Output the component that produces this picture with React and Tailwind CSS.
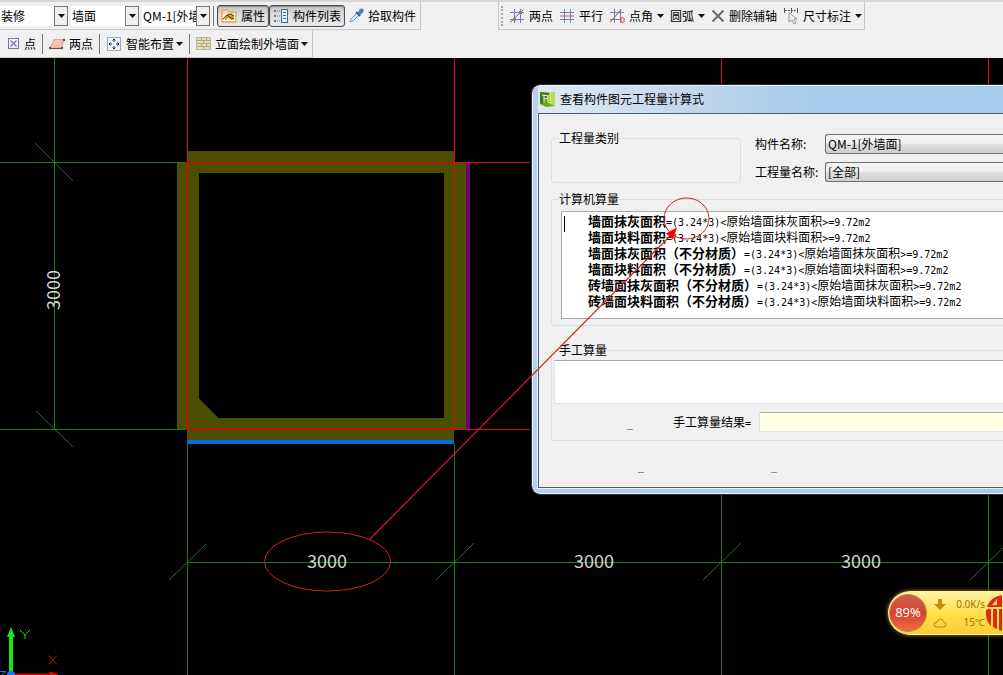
import { useState } from 'react';

const rows = [
  { name: '墙面抹灰面积', source: '原始墙面抹灰面积' },
  { name: '墙面块料面积', source: '原始墙面块料面积' },
  { name: '墙面抹灰面积（不分材质）', source: '原始墙面抹灰面积' },
  { name: '墙面块料面积（不分材质）', source: '原始墙面块料面积' },
  { name: '砖墙面抹灰面积（不分材质）', source: '原始墙面抹灰面积' },
  { name: '砖墙面块料面积（不分材质）', source: '原始墙面块料面积' },
];

const Caret = () => (
  <svg width="7" height="4" viewBox="0 0 7 4" className="shrink-0">
    <path d="M0 0h7L3.5 4z" fill="#111" />
  </svg>
);

const Divider = () => <span className="w-px h-5 bg-[#777] shrink-0" />;

const ToolSelect = ({ label, value }) => (
  <div className="relative w-[68px] h-5 bg-white shrink-0">
    <select aria-label={label} className="appearance-none w-full h-5 pl-px pr-3.5 bg-white outline-none overflow-hidden text-clip">
      <option>{value}</option>
    </select>
    <span className="absolute right-0 top-0 w-3.5 h-5 border border-[#777] bg-[#f0f0f0] flex items-center justify-center pointer-events-none">
      <Caret />
    </span>
  </div>
);

const ToolButton = ({ icon, children, pressed, menu, tight }) => (
  <button
    className={
      pressed
        ? 'flex items-center gap-1 h-[22px] px-[3px] rounded-[3px] border border-[#4c4c4c] bg-linear-to-b from-[#c4c4c4] via-[#dedede] to-[#e9e9e9] shadow-[inset_0_1px_1px_#888] whitespace-nowrap'
        : 'flex items-center gap-1 h-[22px] whitespace-nowrap'
    }
  >
    {icon}
    <span className={tight ? '-mr-0.5' : ''}>{children}</span>
    {menu && <Caret />}
  </button>
);

/* Toolbar icons */
const PropertyIcon = () => (
  <svg width="16" height="16" viewBox="0 0 16 16">
    <path d="M1 2h6l1 2h7v10H1z" fill="#f7d9a0" stroke="#dd9a4a" />
    <path d="M2 6h12v7H2z" fill="#fff6e0" />
    <path d="M3 11l3-4 4-1 3 2v3l-3 1-3-2-2 2z" fill="#c9a52c" />
    <path d="M2 11l4-4 4 3 3 1M6 7l4-1 3 2" fill="none" stroke="#4c3f12" />
    <path d="M1 14h14" stroke="#f0a860" />
  </svg>
);

const ListIcon = () => (
  <svg width="16" height="16" viewBox="0 0 16 16">
    <path d="M1 2h2v2H1zM1 7h2v2H1zM1 12h2v2H1z" fill="#5b7ba8" />
    <path d="M4 3h3M4 8h3M4 13h3" stroke="#5b7ba8" strokeDasharray="1 1" />
    <rect x="8.500" y="1.500" width="6" height="13" fill="#e6effb" stroke="#3f6aa8" />
    <path d="M10 4.500h3M10 7.500h3M10 10.500h3" stroke="#3f6aa8" />
  </svg>
);

const DropperIcon = () => (
  <svg width="16" height="16" viewBox="0 0 16 16">
    <path d="M2 14l1-3 6-6 2 2-6 6z" fill="#dcebf8" stroke="#6f9cc8" />
    <path d="M8 4l4 4" stroke="#2f5f9a" strokeWidth="2" />
    <path d="M9.500 5.500l2.500-4q2-1.500 3 0t-.5 3l-3 2.500z" fill="#4a86c4" stroke="#2f5f9a" strokeWidth=".6" />
  </svg>
);

const PointIcon = () => (
  <svg width="12" height="12" viewBox="0 0 12 12">
    <rect x=".5" y=".5" width="10" height="10" fill="#f0f0fa" stroke="#6d78a8" />
    <path d="M2.500 2.500l6 6M8.500 2.500l-6 6" stroke="#9a6d9c" strokeWidth="1.300" />
  </svg>
);

const PlaneIcon = () => (
  <svg width="16" height="16" viewBox="0 0 16 16">
    <path d="M5 3.500h10L12.500 12H1z" fill="#f4c4ae" stroke="#dba590" />
    <path d="M0 12.500h13" stroke="#7a4a3c" />
    <path d="M0 11h2v2H0zM12 11h2v2h-2zM14 3h2v2h-2z" fill="#6a4038" />
  </svg>
);

const SmartIcon = () => (
  <svg width="16" height="16" viewBox="0 0 16 16">
    <rect x="1.500" y="1.500" width="13" height="13" fill="#e9f1fa" stroke="#4a6488" strokeDasharray="1 1" />
    <path d="M8 3v3M8 10v3M3 8h3M10 8h3" stroke="#234" />
    <path d="M6.500 4.500L8 3l1.500 1.500M6.500 11.500L8 13l1.500-1.500M4.500 6.500L3 8l1.500 1.500M11.500 6.500L13 8l-1.500 1.500" fill="none" stroke="#234" />
  </svg>
);

const BrickIcon = () => (
  <svg width="15" height="15" viewBox="0 0 15 15">
    <rect x=".5" y="1.500" width="14" height="12" fill="#efe0a8" stroke="#bdb59c" />
    <path d="M1 2h4v2H1zM8 5h6v2H8zM1 8h4v2H1zM8 11h6v2H8z" fill="#d8dccf" />
    <path d="M1 4.500h13M1 7.500h13M1 10.500h13M5.500 2v2.500M10.500 2v2.500M7.500 4.500v3M5.500 7.500v3M10.500 7.500v3M7.500 10.500V13" stroke="#b0a88c" />
  </svg>
);

const GridIcon = ({ kind }) => (
  <svg width="16" height="16" viewBox="0 0 16 16">
    <path d="M5.500 1v14M11.500 1v14M1 4.500h14M1 11.500h14" stroke="#6f7db8" />
    {kind === 'line' && <path d="M1 14.500L14.500 1.500" stroke="#c04848" />}
    {kind === 'line' && <path d="M4 10h3v3H4zM10 3h3v3h-3z" fill="#5d9a58" />}
    {kind === 'parallel' && <path d="M1 8h14" stroke="#d86060" />}
    {kind === 'angle' && (
      <>
        <path d="M1 14.500L12 1.500" stroke="#c04848" />
        <ellipse cx="13.500" cy="12" rx="1.800" ry="2.500" fill="#f0f0f0" stroke="#d03838" />
      </>
    )}
  </svg>
);

const CrossIcon = () => (
  <svg width="14" height="14" viewBox="0 0 14 14">
    <path d="M1.500 1.500l11 11M12.500 1.500l-11 11" stroke="#666" strokeWidth="1.800" />
  </svg>
);

const DimensionIcon = () => (
  <svg width="16" height="16" viewBox="0 0 16 16">
    <path d="M1.500 0v5M8.500 0v5M14.500 0v5" stroke="#555" />
    <path d="M2 2.500h12" stroke="#555" strokeDasharray="2 1" />
    <path d="M6 4.500l8 6.500h-3l2 4-2 1-2-4-3 2z" fill="#eee" stroke="#999" />
  </svg>
);

const AppIcon = () => (
  <svg width="16" height="16" viewBox="0 0 16 16" className="shrink-0">
    <path d="M0 1l10 1 5-1v14l-9 1-6-3z" fill="#69a81c" />
    <path d="M0 1l10 1-3 4-5 7-2-1z" fill="#3f7a12" />
    <path d="M10 2l5-1v14l-5-2z" fill="#b6dd45" />
    <path d="M2 4l7 1M4 4v7M4 8l4-1M8 5v6l3 1M10 2v8" stroke="#eef8d8" fill="none" />
  </svg>
);

const Toolbars = () => (
  <header className="h-[58px] shrink-0 bg-[#f0f0f0] border-t-2 border-[#d6d6d6] overflow-hidden">
    <div className="flex h-7 whitespace-nowrap">
      <div className="flex items-center gap-[3px] pr-1 border-r border-b border-[#c8c8c8]">
        <ToolSelect label="模块" value="装修" />
        <ToolSelect label="构件类型" value="墙面" />
        <ToolSelect label="构件" value="QM-1[外墙面]" />
        <Divider />
        <div className="flex">
          <ToolButton icon={<PropertyIcon />} pressed>属性</ToolButton>
          <ToolButton icon={<ListIcon />} pressed>构件列表</ToolButton>
        </div>
        <ToolButton icon={<DropperIcon />}>拾取构件</ToolButton>
      </div>
      <div className="flex items-center gap-1.5 pr-0.5 ml-auto mr-[138px] border-l border-r border-b border-[#c8c8c8]">
        <span className="h-5 ml-0.5 border-l-2 border-dotted border-[#aaa]" />
        <ToolButton icon={<GridIcon kind="line" />}>两点</ToolButton>
        <ToolButton icon={<GridIcon kind="parallel" />}>平行</ToolButton>
        <ToolButton icon={<GridIcon kind="angle" />} menu>点角</ToolButton>
        <ToolButton menu>圆弧</ToolButton>
        <ToolButton icon={<CrossIcon />}>删除辅轴</ToolButton>
        <ToolButton icon={<DimensionIcon />} menu>尺寸标注</ToolButton>
      </div>
    </div>
    <div className="flex h-7">
      <div className="flex items-center gap-1.5 pl-2 pr-1 border-r border-b border-[#c8c8c8]">
        <ToolButton icon={<PointIcon />}>点</ToolButton>
        <Divider />
        <ToolButton icon={<PlaneIcon />}>两点</ToolButton>
        <Divider />
        <ToolButton icon={<SmartIcon />} menu tight>智能布置</ToolButton>
        <Divider />
        <ToolButton icon={<BrickIcon />} menu tight>立面绘制外墙面</ToolButton>
      </div>
    </div>
  </header>
);

/* Floor plan: axes, walls and dimension lines */
const Drawing = () => (
  <svg className="absolute inset-0 w-full h-full" aria-hidden="true">
    <g fill="#4d4d00">
      <path d="M187 93h267v11h12v268h-12v10H187v-10h-10V104h10z" />
      <path d="M199 115h245v245H218.500L199 340.500z" fill="#000" />
      <path d="M466 105h4v266h-4z" fill="#730073" />
      <path d="M187 382h267v4H187z" fill="#0070e0" />
    </g>
    {/* Dimension lines */}
    <g stroke="#1b7a1b">
      <line x1="54.500" y1="0" x2="54.500" y2="371" />
      <line x1="0" y1="104.500" x2="187" y2="104.500" />
      <line x1="0" y1="371.500" x2="187" y2="371.500" />
      <line x1="187.500" y1="386" x2="187.500" y2="617" />
      <line x1="454.500" y1="386" x2="454.500" y2="617" />
      <line x1="721.500" y1="436" x2="721.500" y2="617" />
      <line x1="988.500" y1="436" x2="988.500" y2="617" />
      <line x1="187" y1="504.500" x2="1003" y2="504.500" />
      <path d="M35 85l38 38M36 353l37 36M169 522l37-36M436 522l38-37M703 522l38-37M970 522l38-37" />
    </g>
    {/* Axes */}
    <g stroke="#d01414">
      <line x1="187.500" y1="0" x2="187.500" y2="371" />
      <line x1="454.500" y1="0" x2="454.500" y2="371" />
      <line x1="721.500" y1="0" x2="721.500" y2="30" />
      <line x1="988.500" y1="0" x2="988.500" y2="30" />
      <line x1="187" y1="104.500" x2="530" y2="104.500" />
      <line x1="187" y1="371.500" x2="530" y2="371.500" />
      <path d="M454 105H187v266h267" fill="none" stroke="#b01a00" strokeWidth="2" />
    </g>
    <g fill="#d4d4d4" fontSize="18" textAnchor="middle">
      <text x="327" y="510">3000</text>
      <text x="594" y="510">3000</text>
      <text x="861" y="510">3000</text>
      <text x="60" y="232" transform="rotate(-90 60 232)">3000</text>
    </g>
    {/* Coordinate axes */}
    <path d="M9 579H13v36H9zM11 569l4 10H7z" fill="#12ea12" />
    <path d="M14 616h36v-2l8 2.500H14z" fill="#e00000" stroke="#e00000" />
    <circle cx="11" cy="617" r="4" fill="#1c78f0" />
    <path d="M20 572l5 5 5-5M25 577v4" fill="none" stroke="#2fd02f" />
    <path d="M48.500 597.500l8.500 9M57 597.500l-8.500 9" stroke="#b01818" />
    <path d="M0 613.500h6l-5 4" fill="none" stroke="#2a70e0" />
  </svg>
);

const Annotation = () => (
  <svg className="absolute inset-0 w-full h-full pointer-events-none" aria-hidden="true">
    <g fill="none" stroke="#d42020">
      <ellipse cx="327.500" cy="503.500" rx="63" ry="29.500" />
      <ellipse cx="686.500" cy="160.500" rx="22.500" ry="20.500" />
      <line x1="370" y1="481" x2="670" y2="178" strokeWidth="1.200" />
    </g>
    <path d="M677 169.500l-11 6 7 6z" fill="#f00000" />
  </svg>
);

const Mono = ({ children }) => (
  <span className="font-['DejaVu_Sans_Mono','Liberation_Mono',monospace] text-[10px]">{children}</span>
);

const NameSelect = ({ id, label, value }) => (
  <div className="flex items-center h-5">
    <label htmlFor={id} className="w-[70px] shrink-0 whitespace-nowrap">{label}</label>
    <select
      id={id}
      className="appearance-none flex-1 h-5 pl-0.5 border border-r-0 border-[#707070] rounded-l-[3px] bg-linear-to-b from-[#f2f2f2] from-45% via-[#dddddd] via-55% to-[#cfcfcf] outline-none"
    >
      <option>{value}</option>
    </select>
  </div>
);

const CalcDialog = () => {
  const [manual, setManual] = useState('');
  const [result, setResult] = useState('');

  return (
    <section className="absolute left-[532px] right-0 top-[27px] h-[409px] pl-[5px] pb-[5px] flex flex-col rounded-l-lg border border-r-0 border-[#e8f3fc] bg-linear-to-r from-[#b7cfe8] to-[#a9c9e8] outline outline-[#28323c] overflow-hidden">
      <div className="flex items-center gap-1 h-[27px] pl-0.5 pb-0.5 shrink-0 bg-linear-to-r from-[#dbe8f4] from-5% via-[#c3d8ec] via-30% to-[#a7cbea] to-60%">
        <AppIcon />
        <h1>查看构件图元工程量计算式</h1>
      </div>
      <div className="flex-1 pl-3 pt-4 border border-r-0 border-[#4d5c6e] bg-[#f0f0f0] shadow-[-1px_1px_0_#e8f3fc]">
        <div className="flex gap-3.5">
          <fieldset className="w-[190px] h-[53px] shrink-0 pl-[7px] border border-[#d5dfe5] rounded-[3px]">
            <legend className="h-4 leading-4">工程量类别</legend>
          </fieldset>
          <div className="flex-1 flex flex-col gap-2 pt-1">
            <NameSelect id="component" label="构件名称:" value="QM-1[外墙面]" />
            <NameSelect id="quantity" label="工程量名称:" value="[全部]" />
          </div>
        </div>

        <fieldset className="mt-2 pl-[7px] pb-1.5 min-w-0 border border-r-0 border-[#d5dfe5] rounded-l-[3px]">
          <legend className="h-4 leading-4">计算机算量</legend>
          <div className="relative mt-1 ml-0.5 h-[108px] pt-0.5 pl-[26px] border border-r-0 border-[#a9a9a9] bg-white overflow-hidden">
            <span className="absolute left-0.5 top-1 w-px h-4 bg-black" />
            <ul className="font-['Liberation_Sans','Noto_Sans_CJK_SC',sans-serif]">
              {rows.map((row) => (
                <li key={row.name} className="h-4 leading-4 whitespace-nowrap">
                  <b className="text-[13px]">{row.name}</b>
                  <Mono>=(3.24*3)&lt;</Mono>
                  {row.source}
                  <Mono>&gt;=9.72m2</Mono>
                </li>
              ))}
            </ul>
          </div>
        </fieldset>

        <fieldset className="mt-4 pl-0.5 pb-2 min-w-0 border border-r-0 border-[#d5dfe5] rounded-l-[3px]">
          <legend className="ml-[5px] h-4 leading-4">手工算量</legend>
          <textarea
            aria-label="手工算量"
            value={manual}
            onChange={(e) => setManual(e.target.value)}
            className="block mt-0.5 w-full h-11 resize-none border border-r-0 border-[#e2e3ea] border-t-[#a9a9a9] bg-white outline-none"
          />
          <div className="flex items-center mt-2 pl-[73px]">
            <button className="w-[46px] text-left"><Mono>_</Mono></button>
            <label htmlFor="result" className="w-[86px] shrink-0 whitespace-nowrap">手工算量结果<Mono>=</Mono></label>
            <input
              id="result"
              value={result}
              onChange={(e) => setResult(e.target.value)}
              className="flex-1 min-w-0 h-5 border border-r-0 border-[#e2e3ea] border-t-[#a9a9a9] bg-[#ffffe1] outline-none"
            />
          </div>
        </fieldset>

        <div className="flex mt-4 pl-[87px]">
          <button className="w-[133px] text-left"><Mono>_</Mono></button>
          <button><Mono>_</Mono></button>
        </div>
      </div>
    </section>
  );
};

const SystemWidget = () => (
  <aside className="absolute right-0 bottom-10 w-[115px] h-11 flex items-center gap-1.5 rounded-l-full border border-r-0 border-[#fff3a0] bg-linear-to-b from-[#fff2a0] via-[#ffdf4a] to-[#f7cf35] shadow-[0_0_4px_#a88a20] overflow-hidden text-[#a87408] font-['Noto_Sans',sans-serif] text-[10px]">
    <div className="w-[38px] h-[38px] shrink-0 rounded-full border border-[#b98a5a] bg-linear-to-b from-[#c9604e] via-[#d8402a] to-[#f06a48] flex items-center justify-center text-white text-[13px]">
      89%
    </div>
    <svg width="14" height="34" viewBox="0 0 14 34" className="shrink-0">
      <path d="M5 3h4v5h4l-6 6-6-6h4z" fill="#c88a08" />
      <path d="M3 31h8q2-.5 2-2.500t-2.500-2.500q-.5-3-3-3t-3.500 3Q1 26.500 1 28.500T3 31z" fill="none" stroke="#c08408" />
    </svg>
    <div className="w-8 shrink-0 flex flex-col gap-0.5 items-end leading-4 whitespace-nowrap">
      <span>0.0K/s</span>
      <span>15℃</span>
    </div>
    <svg width="17" height="40" viewBox="0 0 17 40" className="shrink-0 -ml-1.5">
      <path d="M17 2Q5 4 2 14h15zM1 17q3-2 5-1v17Q0 27 1 17zM8 16h4v20l-4-2zM14 16h3v22l-3-1z" fill="#dc2a1c" />
      <path d="M7 12l5-6v6z" fill="#ffd84a" />
    </svg>
  </aside>
);

const App = () => (
  <div className="min-h-screen flex flex-col bg-black text-black text-xs font-['Noto_Sans_CJK_SC',sans-serif]">
    <Toolbars />
    <main className="relative flex-1 min-h-[617px] overflow-hidden">
      <Drawing />
      <CalcDialog />
      <Annotation />
      <SystemWidget />
    </main>
  </div>
);

export default App;
